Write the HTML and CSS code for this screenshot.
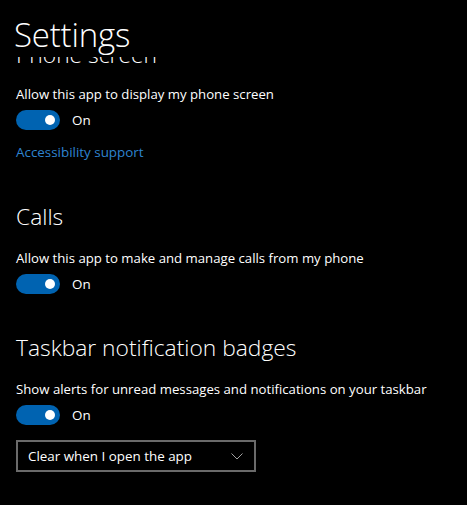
FILE: index.html
```html
<!DOCTYPE html>
<html lang="en">
<head>
<meta charset="utf-8">
<title>Settings</title>
<link rel="stylesheet" href="styles.css">
</head>
<body>
<div class="app">
  <header class="header">
    <h1 class="title">Settings</h1>
  </header>
  <main class="scroll">
    <div class="content">
      <h2 class="section-title first">Phone screen</h2>
      <p class="desc first-desc">Allow this app to display my phone screen</p>
      <div class="toggle-row">
        <span class="toggle"><span class="knob"></span></span>
        <span class="toggle-label">On</span>
      </div>
      <a class="link" href="#">Accessibility support</a>

      <h2 class="section-title calls">Calls</h2>
      <p class="desc">Allow this app to make and manage calls from my phone</p>
      <div class="toggle-row">
        <span class="toggle"><span class="knob"></span></span>
        <span class="toggle-label">On</span>
      </div>

      <h2 class="section-title taskbar">Taskbar notification badges</h2>
      <p class="desc">Show alerts for unread messages and notifications on your taskbar</p>
      <div class="toggle-row">
        <span class="toggle"><span class="knob"></span></span>
        <span class="toggle-label">On</span>
      </div>
      <div class="select">
        <span class="select-text">Clear when I open the app</span>
        <svg class="chevron" width="12" height="7" viewBox="0 0 12 7"><path d="M0.5 0.5 L6 6 L11.5 0.5" fill="none" stroke="#a0a0a0" stroke-width="1"/></svg>
      </div>
    </div>
  </main>
</div>
</body>
</html>
```

FILE: styles.css
```css
* { box-sizing: border-box; }
html, body {
  margin: 0;
  padding: 0;
  background: #000;
  color: #fff;
  font-family: "Open Sans", "Noto Sans", sans-serif;
  width: 467px;
  height: 505px;
  overflow: hidden;
}
.app {
  display: flex;
  flex-direction: column;
  height: 505px;
}
.header {
  height: 57px;
  padding: 15px 0 0 14px;
  flex: none;
  position: relative;
  z-index: 1;
}
.title {
  margin: 0;
  font-weight: 300;
  font-size: 33px;
  line-height: 40px;
  letter-spacing: -0.2px;
}
.scroll {
  flex: 1;
  overflow: hidden;
}
.content {
  padding-left: 16px;
  display: flex;
  flex-direction: column;
  align-items: flex-start;
}
.section-title {
  margin: 0;
  font-weight: 300;
  font-size: 22.8px;
  line-height: 32px;
}
.section-title.first { margin-top: -18px; }
.section-title.calls { margin-top: 39px; }
.section-title.taskbar { margin-top: 38px; }
.desc {
  margin: 15px 0 0 0;
  font-size: 13.2px;
  line-height: 20px;
}
.desc.first-desc { margin-top: 13px; }
.toggle-row {
  margin-top: 6px;
  display: flex;
  align-items: center;
  gap: 12px;
  height: 20px;
}
.toggle {
  width: 44px;
  height: 20px;
  border-radius: 10px;
  background: #0063b1;
  display: flex;
  align-items: center;
  justify-content: flex-end;
  padding-right: 5px;
}
.knob {
  width: 10px;
  height: 10px;
  border-radius: 50%;
  background: #fff;
}
.toggle-label {
  font-size: 13.4px;
  line-height: 20px;
}
.link {
  margin-top: 12px;
  color: #2e84d0;
  text-decoration: none;
  font-size: 13.4px;
  line-height: 20px;
}
.select {
  margin-top: 15px;
  width: 240px;
  height: 32px;
  border: 2px solid #6a6a6a;
  display: flex;
  align-items: center;
  justify-content: space-between;
  padding: 0 11px 0 10px;
}
.select-text {
  font-size: 13.4px;
  line-height: 20px;
}
.chevron { display: block; }
```
